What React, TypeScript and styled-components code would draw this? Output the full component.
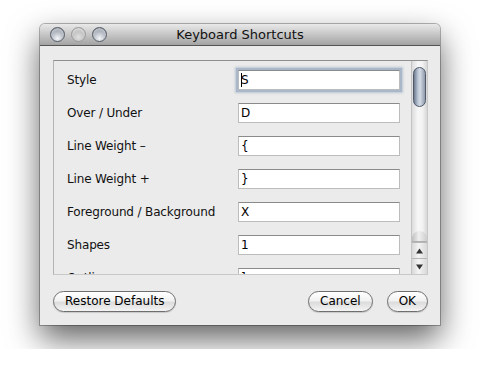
import React from "react";
import styled, { createGlobalStyle } from "styled-components";

const GlobalStyle = createGlobalStyle`
  html, body {
    margin: 0;
    background: #ffffff;
  }
  body {
    font-family: "DejaVu Sans", "Liberation Sans", sans-serif;
  }
`;

const shortcuts = [
  { label: "Style", key: "S", focused: true },
  { label: "Over / Under", key: "D" },
  { label: "Line Weight \u2013", key: "{" },
  { label: "Line Weight +", key: "}" },
  { label: "Foreground / Background", key: "X" },
  { label: "Shapes", key: "1" },
  { label: "Outline", key: "]" },
];

const App = () => {
  return (
    <Page>
      <GlobalStyle />
      <Window>
        <TitleBar>
          <Lights>
            <Light />
            <Light dim />
            <Light />
          </Lights>
          <Title>Keyboard Shortcuts</Title>
        </TitleBar>
        <Body>
          <Panel>
            <List>
              {shortcuts.map((s) => (
                <Row key={s.label}>
                  <Label>{s.label}</Label>
                  <Field focused={s.focused}>
                    {s.focused && <Caret />}
                    {s.key}
                  </Field>
                </Row>
              ))}
            </List>
            <ScrollBar>
              <Track>
                <Thumb />
                <TrackEnd />
              </Track>
              <Arrow>
                <svg width="7" height="6" viewBox="0 0 7 6">
                  <path d="M3.5 0.5 L7 5.5 L0 5.5 Z" fill="#333" />
                </svg>
              </Arrow>
              <Arrow>
                <svg width="7" height="6" viewBox="0 0 7 6">
                  <path d="M0 0.5 L7 0.5 L3.5 5.5 Z" fill="#333" />
                </svg>
              </Arrow>
            </ScrollBar>
          </Panel>
          <Buttons>
            <Button>Restore Defaults</Button>
            <Spacer />
            <Button>Cancel</Button>
            <Button wide>OK</Button>
          </Buttons>
        </Body>
      </Window>
    </Page>
  );
};

const Page = styled.div`
  padding: 24px 40px;
  width: 400px;
`;

const Window = styled.div`
  width: 400px;
  height: 301px;
  background: #ebebeb;
  border-radius: 5px 5px 0 0;
  box-shadow: 0 0 0 1px rgba(0, 0, 0, 0.28), 0 14px 32px rgba(0, 0, 0, 0.62);
  display: flex;
  flex-direction: column;
  overflow: hidden;
`;

const TitleBar = styled.div`
  height: 21px;
  border-bottom: 1px solid #555;
  background: linear-gradient(#e9e9e9, #c6c6c6 50%, #a3a3a3);
  display: flex;
  align-items: center;
  position: relative;
`;

const Lights = styled.div`
  display: flex;
  gap: 6px;
  padding-left: 10px;
`;

const Light = styled.div<{ dim?: boolean }>`
  width: 13px;
  height: 13px;
  border-radius: 50%;
  border: 1px solid ${(p) => (p.dim ? "#9a9a9a" : "#555b66")};
  background: ${(p) =>
    p.dim
      ? "radial-gradient(circle at 50% 70%, #e0e0e0, #b8b8b8 70%)"
      : "radial-gradient(circle at 50% 80%, #f4f6f8, #b0b6c0 55%, #6c7280 90%)"};
  box-shadow: inset 0 2px 2px rgba(255, 255, 255, 0.5);
`;

const Title = styled.div`
  position: absolute;
  left: 0;
  right: 0;
  text-align: center;
  font-size: 13px;
  color: #111;
  pointer-events: none;
`;

const Body = styled.div`
  flex: 1;
  display: flex;
  flex-direction: column;
  padding: 14px 12px 13px 13px;
`;

const Panel = styled.div`
  height: 213px;
  width: 373px;
  border-top: 1px solid #8e8e8e;
  border-left: 1px solid #b4b4b4;
  border-right: 1px solid #c8c8c8;
  border-bottom: 1px solid #c8c8c8;
  display: flex;
  overflow: hidden;
`;

const List = styled.div`
  flex: 1;
  padding: 9px 0 0 13px;
  display: flex;
  flex-direction: column;
  gap: 13px;
`;

const Row = styled.div`
  display: flex;
  align-items: center;
  height: 20px;
  flex-shrink: 0;
`;

const Label = styled.div`
  width: 171px;
  font-size: 12px;
  letter-spacing: -0.15px;
  color: #111;
`;

const Field = styled.div<{ focused?: boolean }>`
  width: 158px;
  height: 18px;
  background: #fff;
  border: 1px solid #bcbcbc;
  border-top-color: #8a8a8a;
  font-size: 12px;
  line-height: 18px;
  padding-left: 2px;
  box-sizing: content-box;
  color: #000;
  display: flex;
  align-items: center;
  box-shadow: ${(p) =>
    p.focused ? "0 0 0 2px #a9b8c9, 0 0 2px 3px rgba(140, 160, 185, 0.5)" : "none"};
`;

const Caret = styled.span`
  width: 1px;
  height: 14px;
  background: #000;
  margin-right: -1px;
`;

const ScrollBar = styled.div`
  width: 15px;
  display: flex;
  flex-direction: column;
  border-left: 1px solid #c4c4c4;
  background: linear-gradient(90deg, #dcdcdc, #f7f7f7 40%, #f2f2f2 70%, #d6d6d6);
`;

const Track = styled.div`
  flex: 1;
  padding: 6px 1px 0;
  display: flex;
  flex-direction: column;
  justify-content: space-between;
`;

const Thumb = styled.div`
  height: 40px;
  border-radius: 7px;
  border: 1px solid #4f596a;
  box-sizing: border-box;
  background: linear-gradient(90deg, #6f7b8e, #b9c4d3 35%, #d4dbe5 55%, #8e99aa);
`;

const TrackEnd = styled.div`
  height: 10px;
  margin: 0 -1px;
  border-radius: 8px 8px 0 0;
  background: linear-gradient(90deg, #bdbdbd, #efefef 45%, #cdcdcd);
  border-bottom: 1px solid #b0b0b0;
`;

const Arrow = styled.div`
  height: 15px;
  display: flex;
  align-items: center;
  justify-content: center;
  border-top: 1px solid #b6b6b6;
  background: linear-gradient(90deg, #d8d8d8, #f4f4f4 45%, #d8d8d8);
`;

const Buttons = styled.div`
  margin-top: auto;
  display: flex;
  align-items: center;
  gap: 14px;
`;

const Spacer = styled.div`
  flex: 1;
`;

const Button = styled.button<{ wide?: boolean }>`
  height: 21px;
  padding: 0 ${(p) => (p.wide ? "11px" : "11px")};
  min-width: ${(p) => (p.wide ? "40px" : "auto")};
  border-radius: 11px;
  border: 1px solid #6e6e6e;
  background: linear-gradient(#ffffff, #f2f2f2 45%, #dcdcdc 55%, #f4f4f4);
  box-shadow: 0 1px 1px rgba(0, 0, 0, 0.15);
  font-family: "DejaVu Sans", "Liberation Sans", sans-serif;
  font-size: 12px;
  color: #000;
  line-height: 19px;
`;

export default App;
